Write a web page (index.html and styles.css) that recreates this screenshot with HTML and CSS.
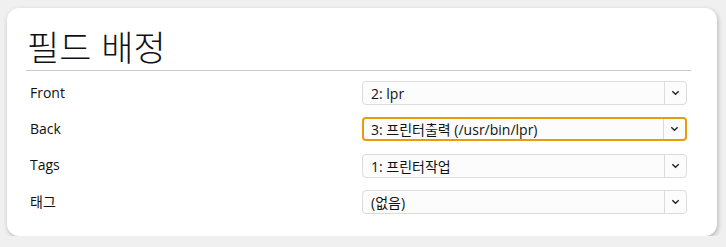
FILE: index.html
```html
<!DOCTYPE html>
<html lang="ko">
<head>
  <meta charset="UTF-8" />
  <title>필드 배정</title>
  <link rel="stylesheet" href="styles.css">
</head>
<body>
  <div class="card">
    <h1>필드 배정</h1>
    <div class="fields">
      <div class="field-label">Front</div>
      <div class="select">
        <span class="select-value">2: lpr</span>
        <span class="select-arrow"><svg width="9" height="6" viewBox="0 0 9 6"><path d="M1.3 1.3 L4.5 4.3 L7.7 1.3" fill="none" stroke="#222" stroke-width="1.4"/></svg></span>
      </div>

      <div class="field-label">Back</div>
      <div class="select focused">
        <span class="select-value">3: 프린터출력 (/usr/bin/lpr)</span>
        <span class="select-arrow"><svg width="9" height="6" viewBox="0 0 9 6"><path d="M1.3 1.3 L4.5 4.3 L7.7 1.3" fill="none" stroke="#222" stroke-width="1.4"/></svg></span>
      </div>

      <div class="field-label">Tags</div>
      <div class="select">
        <span class="select-value">1: 프린터작업</span>
        <span class="select-arrow"><svg width="9" height="6" viewBox="0 0 9 6"><path d="M1.3 1.3 L4.5 4.3 L7.7 1.3" fill="none" stroke="#222" stroke-width="1.4"/></svg></span>
      </div>

      <div class="field-label">태그</div>
      <div class="select">
        <span class="select-value">(없음)</span>
        <span class="select-arrow"><svg width="9" height="6" viewBox="0 0 9 6"><path d="M1.3 1.3 L4.5 4.3 L7.7 1.3" fill="none" stroke="#222" stroke-width="1.4"/></svg></span>
      </div>
    </div>
  </div>
</body>
</html>
```

FILE: styles.css
```css
body {
  margin: 0;
  background: #f0f0f0;
  font-family: "Open Sans", "Noto Sans CJK KR", sans-serif;
  color: #111;
}

.card {
  box-sizing: border-box;
  margin: 8px 0 0 7px;
  width: 710px;
  height: 228px;
  padding: 14px 26px 0 19px;
  background: #fff;
  border-radius: 12px;
  box-shadow: 1px 2px 5px rgba(0,0,0,0.25);
}

h1 {
  margin: 0;
  font-family: "Noto Sans CJK KR", sans-serif;
  font-weight: 300;
  font-size: 35px;
  line-height: 48px;
  padding-left: 1px;
  border-bottom: 1px solid #c8c8c8;
}

.fields {
  display: grid;
  grid-template-columns: 336px 325px;
  grid-auto-rows: 24px;
  row-gap: 12.3px;
  margin-top: 10px;
  align-items: center;
}

.field-label {
  padding-left: 4px;
  font-size: 14px;
  font-family: "Open Sans", "Noto Sans CJK KR", sans-serif;
  position: relative;
  top: -1px;
}

.select {
  box-sizing: border-box;
  height: 24px;
  display: flex;
  align-items: center;
  background: #fcfcfc;
  border: 1px solid #dcdcdc;
  border-radius: 4px;
  font-size: 14px;
}

.select.focused {
  border: 2px solid #e89c0c;
}

.select-value {
  flex: 1;
  padding-left: 8px;
  white-space: nowrap;
}

.select.focused .select-value {
  padding-left: 7px;
}

.select-arrow {
  width: 21px;
  height: 100%;
  border-left: 1px solid #dcdcdc;
  display: flex;
  align-items: center;
  justify-content: center;
}
```
